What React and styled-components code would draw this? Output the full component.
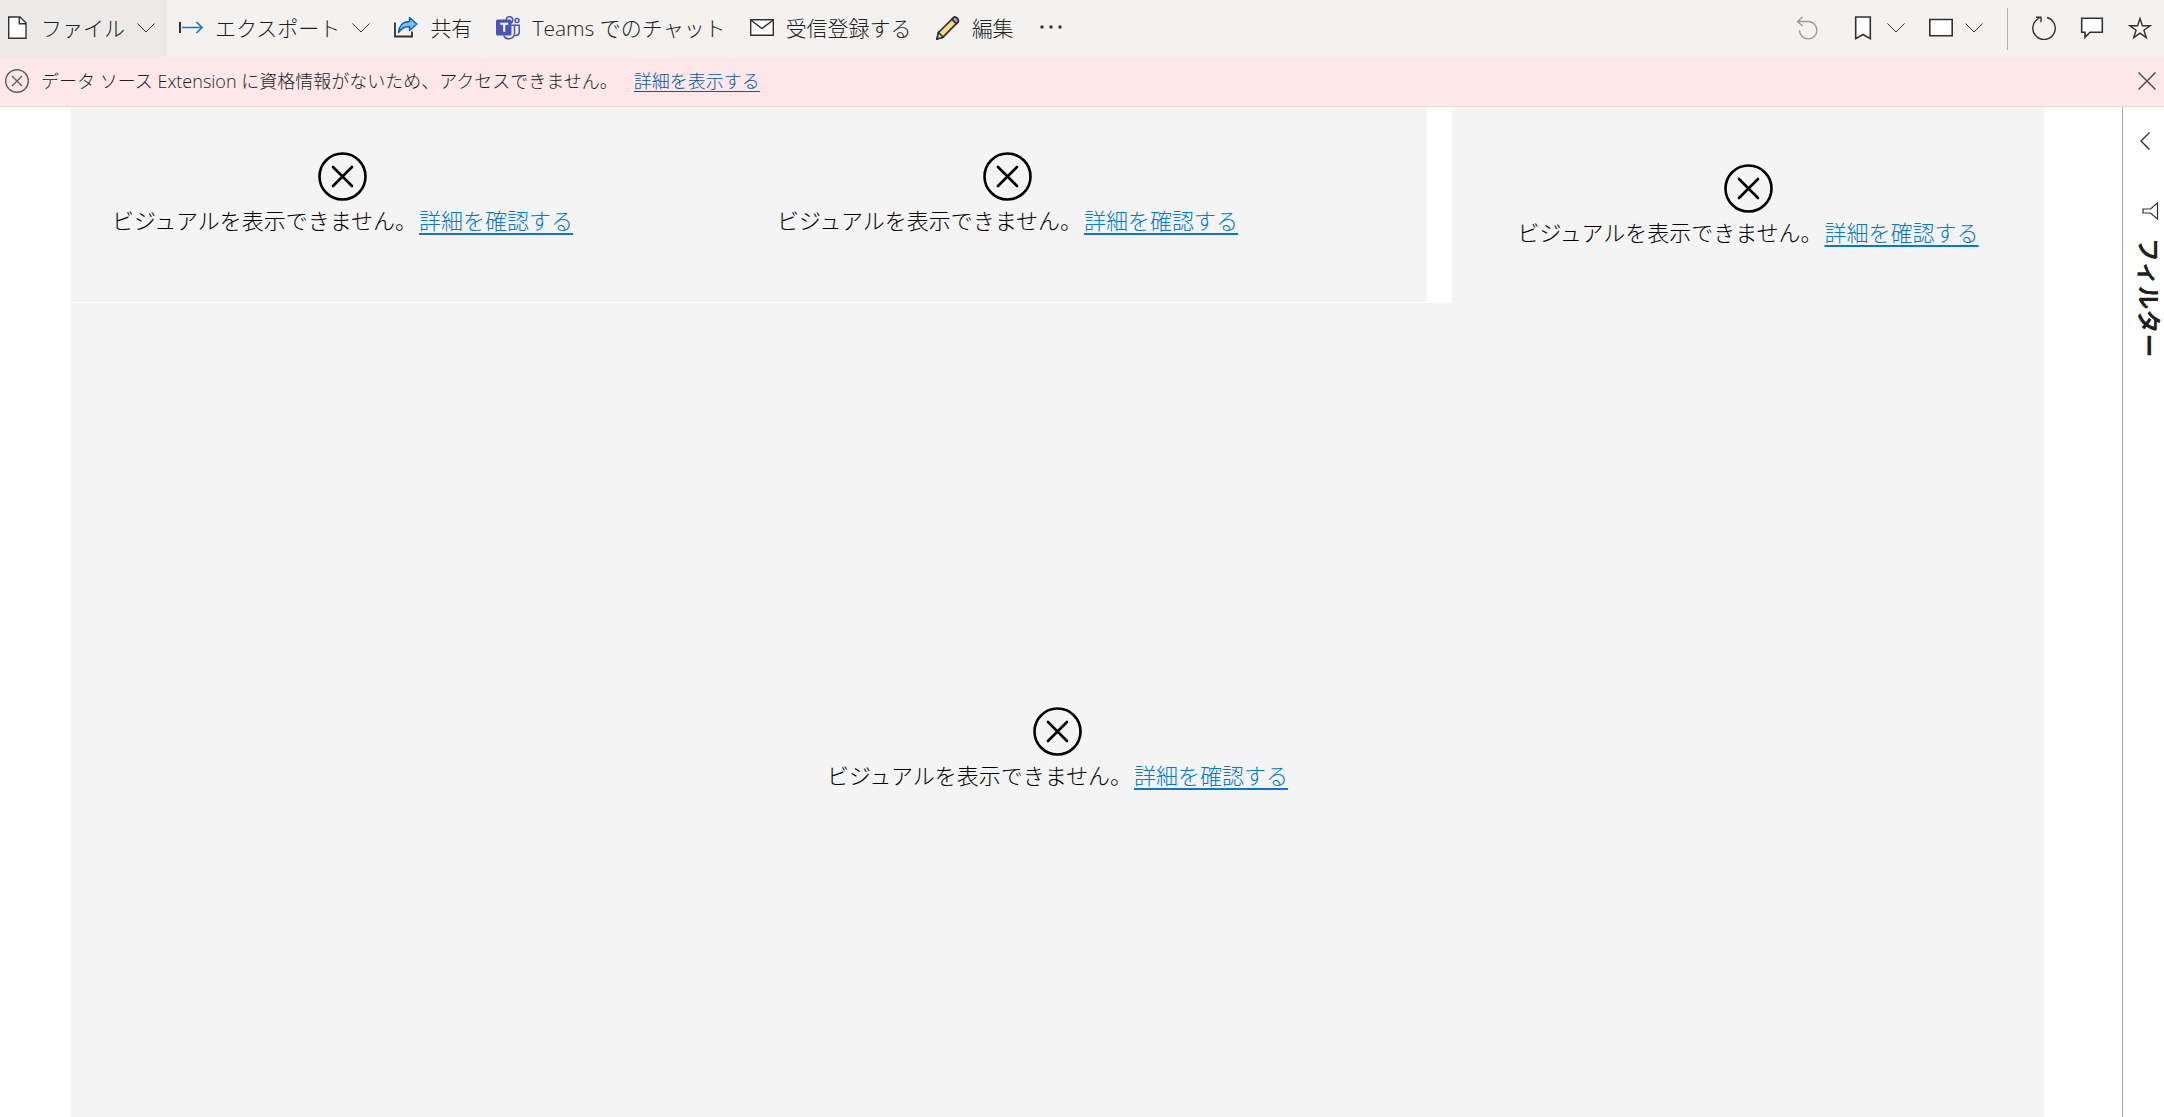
import React from "react";
import styled, { createGlobalStyle } from "styled-components";

const Global = createGlobalStyle`
  *, *::before, *::after { box-sizing: border-box; }
  html, body { margin: 0; padding: 0; }
  body {
    font-family: "Open Sans", "Noto Sans CJK JP", sans-serif;
    font-weight: 300;
    color: #201f1e;
    background: #fff;
  }
  button { font: inherit; color: inherit; background: none; border: 0; margin: 0; cursor: pointer; }
  svg { display: block; flex: none; }
`;

const Page = styled.div`
  display: flex;
  flex-direction: column;
  height: 100vh;
  overflow: hidden;
`;

const Toolbar = styled.header`
  display: flex;
  justify-content: space-between;
  height: 57px;
  flex: none;
  background: #f3f2f1;
`;

const Group = styled.div`
  display: flex;
  align-items: center;
  height: 100%;
`;

const ToolButton = styled.button`
  display: flex;
  align-items: center;
  gap: 12px;
  height: 100%;
  padding: 0 12px 2px ${(p) => (p.$first ? 5 : 12)}px;
  font-size: 21px;
  line-height: 32px;
  white-space: nowrap;
  background: ${(p) => (p.$active ? "#ebeae9" : "transparent")};
  opacity: ${(p) => (p.disabled ? 0.45 : 1)};
`;

const Spacer = styled.span`
  width: 8px;
`;

const Divider = styled.span`
  width: 1px;
  height: 42px;
  margin: 0 12px;
  background: #b3b0ad;
`;

const Banner = styled.div`
  display: flex;
  align-items: center;
  gap: 12px;
  height: 50px;
  flex: none;
  padding: 0 8px 2px 5px;
  background: #fde7e9;
  border-bottom: 1px solid #dedcdb;
  font-size: 18px;
  line-height: 26px;
`;

const BannerText = styled.p`
  flex: 1;
  margin: 0;
`;

const BannerLink = styled.a`
  margin-left: 16px;
  color: #005a9e;
  text-decoration: underline;
  text-decoration-thickness: 1px;
  text-underline-offset: 3px;
`;

const IconButton = styled.button`
  display: flex;
  padding: 0;
`;

const Main = styled.main`
  display: flex;
  flex: 1;
  min-height: 0;
`;

const Report = styled.section`
  display: flex;
  flex-direction: column;
  flex: 1;
  margin: 0 78px 0 71px;
`;

const TopRow = styled.div`
  display: flex;
  gap: 25px;
  height: 196px;
  flex: none;
`;

const CardPair = styled.div`
  display: grid;
  grid-template-columns: 543fr 813fr;
  flex: 1356 1 0;
  border-bottom: 1px solid #fff;
`;

const SideCard = styled.div`
  display: grid;
  flex: 592 1 0;
`;

const VisualBox = styled.article`
  display: flex;
  flex-direction: column;
  align-items: center;
  flex: 1;
  padding: ${(p) => p.$top}px ${(p) => p.$right || 0}px 0 0;
  background: #f4f4f4;
`;

const VisualText = styled.p`
  margin: 4px 0 0;
  color: #000;
  font-size: 22px;
  line-height: 30px;
  white-space: nowrap;
`;

const VisualLink = styled.a`
  margin-left: 2px;
  color: #0078d4;
  text-decoration: underline;
  text-decoration-thickness: 2px;
  text-underline-offset: 4px;
`;

const FilterPane = styled.aside`
  display: flex;
  flex-direction: column;
  align-items: center;
  width: 42px;
  padding: 25px 0 0 13px;
  border-left: 1px solid #a6a6a6;
`;

const FilterIcon = styled.div`
  margin-top: 52px;
`;

const FilterTitle = styled.h2`
  margin: 18px 0 0;
  font-family: "Noto Sans CJK JP", sans-serif;
  font-size: 24px;
  line-height: 24px;
  font-weight: 700;
  writing-mode: vertical-rl;
  text-orientation: sideways;
`;

const Icon = ({ children, w = 24, h = 24, stroke = "#323130", sw = 1.4 }) => (
  <svg width={w} height={h} viewBox={`0 0 ${w} ${h}`} fill="none" stroke={stroke} strokeWidth={sw} aria-hidden="true">
    {children}
  </svg>
);

const Chevron = () => (
  <Icon w={18} h={12} sw={1}>
    <path d="M.5 1.500 9 10l8.500-8.500" />
  </Icon>
);

const FileIcon = () => (
  <Icon>
    <path d="M3.700 1H15l6 6v15.300H3.700z" fill="#fff" />
    <path d="M14.300 1v6.800H21" />
  </Icon>
);

const ExportIcon = () => (
  <Icon>
    <path d="M1 6v11" strokeWidth="2" />
    <path d="M3 11.500h20M17.500 6l5.500 5.500-5.500 5.500" stroke="#1f7ab8" strokeWidth="1.700" />
  </Icon>
);

const ShareIcon = () => (
  <Icon>
    <path d="M1 6.500V20.500H18V15.500" strokeWidth="1.800" />
    <path d="M15.500 1.500 22.800 8l-7.300 6.500v-4C10.500 10.500 7.500 12 4.500 16.500 5 10 9 5.500 15.500 5.500z" fill="#83bdec" stroke="#0063b1" strokeLinejoin="round" />
  </Icon>
);

const TeamsIcon = () => (
  <svg width="24" height="24" viewBox="0 0 24 24" fill="none" stroke="#4b53bc" strokeWidth="1.500" aria-hidden="true">
    <circle cx="13.500" cy="4" r="3.200" />
    <circle cx="21" cy="4.500" r="2" />
    <path d="M15.500 9.200h3v8a5.700 5.700 0 0 1-10.800 2.400" />
    <path d="M18.500 9.200h4.700v7a3.200 3.200 0 0 1-3.200 3.200h-1.500" />
    <rect x="0" y="3.500" width="15.500" height="16" rx="1.500" fill="#4b53bc" stroke="none" />
    <path d="M4.200 7.800h8M8.200 7.800v8" stroke="#fff" strokeWidth="2" />
  </svg>
);

const MailIcon = () => (
  <Icon>
    <path d="M.7 3.700h22.600v15.600H.7z" fill="#fff" />
    <path d="M.7 4l11.300 8.500L23.300 4" />
  </Icon>
);

const PencilIcon = () => (
  <Icon sw={1.7}>
    <path d="M2.500 16.500 17.800 1.400c1.500-1.300 5.400 1.900 4.300 4.500L7 21.200 1 23z" fill="#fadb84" strokeLinejoin="round" />
    <path d="M16 3.200 17.800 1.400c1.500-1.300 5.400 1.900 4.300 4.500l-1.800 1.900z" fill="#d692dc" />
    <path d="M2.500 16.500 7 21.200 1 23z" fill="#fff" />
  </Icon>
);

const MoreIcon = () => (
  <Icon>
    <g fill="#323130" stroke="none">
      <circle cx="4" cy="11" r="1.700" />
      <circle cx="13" cy="11" r="1.700" />
      <circle cx="22" cy="11" r="1.700" />
    </g>
  </Icon>
);

const UndoIcon = () => (
  <Icon>
    <path d="M7.500 1 2.500 5.500 7.500 10M2.500 5.500h11a8.700 8.700 0 1 1-9 8.700" />
  </Icon>
);

const BookmarkIcon = () => (
  <Icon sw={1.6}>
    <path d="M4.700 1h14.600v21.600L12 18.500l-7.300 4.100z" fill="#fff" />
  </Icon>
);

const ViewIcon = () => (
  <Icon sw={1.6}>
    <path d="M.8 3.500h22.400v16.200H.8z" fill="#fff" />
  </Icon>
);

const RefreshIcon = () => (
  <Icon>
    <path d="M15 1.500A11.200 11.200 0 1 1 7.200 2.200M4 1.200h5v5" />
  </Icon>
);

const CommentIcon = () => (
  <Icon sw={1.6}>
    <path d="M1.700 2.200h20.600v14H10l-5 5v-5H1.700z" fill="#fff" />
  </Icon>
);

const StarIcon = () => (
  <Icon>
    <path d="M12 2.500 14.400 9.800h7.700l-6.200 4.500 2.400 7.300-6.300-4.500-6.300 4.500 2.400-7.300L1.900 9.800h7.700z" />
  </Icon>
);

const ErrorIcon = () => (
  <Icon stroke="#605e5c">
    <circle cx="12" cy="12" r="11.300" />
    <path d="M7 7l10 10M17 7 7 17" />
  </Icon>
);

const BigErrorIcon = () => (
  <Icon w={49} h={49} stroke="#000" sw={2.6}>
    <circle cx="24.500" cy="24.500" r="23" />
    <path d="M15 15l19 19M34 15l-19 19" strokeLinecap="round" />
  </Icon>
);

const Visual = ({ top, right }) => (
  <VisualBox $top={top} $right={right}>
    <BigErrorIcon />
    <VisualText>
      ビジュアルを表示できません。<VisualLink href="#">詳細を確認する</VisualLink>
    </VisualText>
  </VisualBox>
);

export default function App() {
  return (
    <Page>
      <Global />
      <Toolbar>
        <Group>
          <ToolButton $first $active><FileIcon />ファイル<Chevron /></ToolButton>
          <ToolButton><ExportIcon />エクスポート<Chevron /></ToolButton>
          <ToolButton><ShareIcon />共有</ToolButton>
          <ToolButton><TeamsIcon />Teams でのチャット</ToolButton>
          <ToolButton><MailIcon />受信登録する</ToolButton>
          <ToolButton><PencilIcon />編集</ToolButton>
          <ToolButton aria-label="その他"><MoreIcon /></ToolButton>
        </Group>
        <Group>
          <ToolButton disabled aria-label="元に戻す"><UndoIcon /></ToolButton>
          <Spacer />
          <ToolButton aria-label="ブックマーク"><BookmarkIcon /><Chevron /></ToolButton>
          <ToolButton aria-label="表示"><ViewIcon /><Chevron /></ToolButton>
          <Divider />
          <ToolButton aria-label="更新"><RefreshIcon /></ToolButton>
          <ToolButton aria-label="コメント"><CommentIcon /></ToolButton>
          <ToolButton aria-label="お気に入り"><StarIcon /></ToolButton>
        </Group>
      </Toolbar>
      <Banner role="alert">
        <ErrorIcon />
        <BannerText>
          データ ソース Extension に資格情報がないため、アクセスできません。
          <BannerLink href="#">詳細を表示する</BannerLink>
        </BannerText>
        <IconButton aria-label="閉じる">
          <Icon w={18} h={18} stroke="#484644"><path d="M.5.5l17 17M17.500.5l-17 17" /></Icon>
        </IconButton>
      </Banner>
      <Main>
        <Report>
          <TopRow>
            <CardPair>
              <Visual top={45} />
              <Visual top={45} right={26} />
            </CardPair>
            <SideCard>
              <Visual top={57} />
            </SideCard>
          </TopRow>
          <Visual top={404} />
        </Report>
        <FilterPane>
          <IconButton aria-label="展開">
            <Icon w={20} h={18}><path d="M9.500.5 1 9l8.500 8.500" /></Icon>
          </IconButton>
          <FilterIcon>
            <Icon w={18} h={18} sw={1.2}><path d="M16.500 1v16L9.500 11H2V7h7.500z" /></Icon>
          </FilterIcon>
          <FilterTitle>フィルター</FilterTitle>
        </FilterPane>
      </Main>
    </Page>
  );
}
